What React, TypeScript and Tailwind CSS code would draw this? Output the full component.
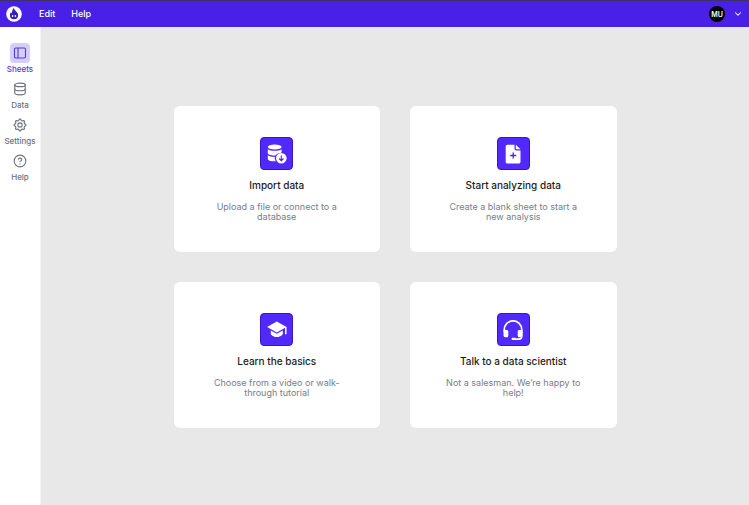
import type { ReactNode } from "react";
import { ChevronDown, CircleHelp, Database } from "lucide-react";

function Logo() {
  return (
    <svg viewBox="0 0 16 16" className="size-4" aria-hidden="true">
      <circle cx="8" cy="8" r="7.8" fill="#fff" />
      <path
        d="M7.8 2c.4 1.500 1.500 2.600 2.600 3.700 1 1 1.700 2.100 1.700 3.500a4.100 4.100 0 0 1-8.200 0c0-1.200.4-2.100 1-2.900.2.500.6.800 1 .9C6 5.300 6.500 3.300 7.800 2Z"
        fill="#3a1fc0"
      />
      <ellipse cx="6.600" cy="10" rx=".8" ry="1.100" fill="#fff" />
      <ellipse cx="9.400" cy="10" rx=".8" ry="1.100" fill="#fff" />
    </svg>
  );
}

function SheetsIcon() {
  return (
    <svg
      viewBox="0 0 14 14"
      className="size-3.5"
      fill="none"
      stroke="currentColor"
      strokeWidth="1.1"
      aria-hidden="true"
    >
      <rect x="1.500" y="2" width="11" height="10" rx="1.200" />
      <path d="M5 2v10" />
    </svg>
  );
}

function GearIcon() {
  return (
    <svg
      viewBox="0 0 24 24"
      className="size-3.5"
      fill="none"
      stroke="currentColor"
      strokeWidth="1.900"
      strokeLinejoin="round"
      aria-hidden="true"
    >
      <path d="M10 4.200 10.700 2h2.600l.7 2.200 2.100.9 2-.9 1.800 1.800-.9 2 .9 2.100 2.100.6v2.600l-2.100.7-.9 2.100.9 2-1.800 1.800-2-.9-2.100.9-.7 2.100h-2.600l-.7-2.100-2.100-.9-2 .9-1.800-1.800.9-2-.9-2.100-2.100-.7v-2.600l2.100-.6.9-2.100-.9-2 1.800-1.800 2 .9Z" />
      <circle cx="12" cy="12" r="3.700" />
    </svg>
  );
}

function ImportIcon() {
  return (
    <svg viewBox="0 0 20 20" className="size-5" fill="#fff" aria-hidden="true">
      <ellipse cx="7.700" cy="3" rx="6.900" ry="2.600" />
      <path d="M.8 5.200c1.300 1.100 4 1.600 6.900 1.600s5.600-.5 6.900-1.600v2.600c0 .5-.4.900-1.100 1.200-2.200.2-4 1.100-5 2.500C3.900 11.700.8 10.600.8 9.300Z" />
      <path d="M.8 11.200c1.400 1 3.900 1.500 7 1.500a6.700 6.700 0 0 0 .9 4.600C4.300 17.600.8 16.500.8 15Z" />
      <circle cx="14.300" cy="14.200" r="5.300" />
      <path
        d="M14.300 11.500v5m-2.200-2 2.200 2.200 2.200-2.200"
        fill="none"
        stroke="#4b22ee"
        strokeWidth="1.100"
      />
    </svg>
  );
}

function NewSheetIcon() {
  return (
    <svg viewBox="0 0 20 20" className="size-5" aria-hidden="true">
      <path
        d="M4.500.7h7v3.800c0 1.200.8 2 2 2h4v11.200c0 1-.8 1.800-1.800 1.800H4.500c-1 0-1.800-.8-1.800-1.800V2.500c0-1 .8-1.800 1.800-1.800Z"
        fill="#fff"
      />
      <path d="M12.800.7 17.500 5.200h-3.900c-.5 0-.8-.3-.8-.8Z" fill="#fff" />
      <path d="M10.200 8.500v6M7.200 11.500h6" stroke="#4b22ee" strokeWidth="1.300" />
    </svg>
  );
}

function GraduationIcon() {
  return (
    <svg viewBox="0 0 20 20" className="size-5" fill="#fff" aria-hidden="true">
      <path d="M9.800 1.500 19.500 7l-9.700 5.500L.1 7Z" />
      <path d="M3.800 10.400v3.800c1.500 1.800 3.600 2.900 6 2.900s4.500-1.100 6-2.900v-3.800l-6 3.400Z" />
      <path d="M18.800 7v7.300" fill="none" stroke="#fff" strokeWidth="1.500" />
    </svg>
  );
}

function HeadsetIcon() {
  return (
    <svg viewBox="0 0 20 20" className="size-5" aria-hidden="true">
      <path
        d="M1.300 12V9.500a8.700 8.700 0 0 1 17.400 0v6.700c0 1.700-1.200 2.900-2.900 2.900H9.500"
        fill="none"
        stroke="#fff"
        strokeWidth="1.700"
      />
      <path
        d="M.5 10h3.300c.9 0 1.500.6 1.500 1.500v4.300c0 .9-.6 1.500-1.500 1.500H2.500c-1.200 0-2-.8-2-2Zm19 0h-3.300c-.9 0-1.500.6-1.500 1.500v4.300c0 .9.600 1.500 1.500 1.500h1.300c1.200 0 2-.8 2-2Z"
        fill="#fff"
      />
      <rect x="8.500" y="17.700" width="4.500" height="2.200" rx="1.100" fill="#fff" />
    </svg>
  );
}

const navItems = [
  { label: "Sheets", icon: <SheetsIcon />, active: true },
  { label: "Data", icon: <Database className="size-3.5" strokeWidth={1.9} /> },
  { label: "Settings", icon: <GearIcon /> },
  { label: "Help", icon: <CircleHelp className="size-3.5" strokeWidth={1.9} /> },
];

const cards = [
  {
    title: "Import data",
    text: "Upload a file or connect to a database",
    icon: <ImportIcon />,
  },
  {
    title: "Start analyzing data",
    text: "Create a blank sheet to start a new analysis",
    icon: <NewSheetIcon />,
  },
  {
    title: "Learn the basics",
    text: "Choose from a video or walk-through tutorial",
    icon: <GraduationIcon />,
  },
  {
    title: "Talk to a data scientist",
    text: "Not a salesman. We’re happy to help!",
    icon: <HeadsetIcon />,
  },
];

function NavLink({
  label,
  icon,
  active,
}: {
  label: string;
  icon: ReactNode;
  active?: boolean;
}) {
  return (
    <a
      href="#"
      aria-current={active ? "page" : undefined}
      className={
        active
          ? "flex flex-col items-center text-[#5638dc]"
          : "flex flex-col items-center text-[#6b7280]"
      }
    >
      <span
        className={
          active
            ? "flex size-5 items-center justify-center rounded bg-[#d5cdfb]"
            : "flex size-5 items-center justify-center"
        }
      >
        {icon}
      </span>
      <span className="text-[8px] leading-3 font-medium">{label}</span>
    </a>
  );
}

function StartCard({
  title,
  text,
  icon,
}: {
  title: string;
  text: string;
  icon: ReactNode;
}) {
  return (
    <button
      type="button"
      className="flex flex-col items-center rounded-md bg-white px-9 pt-[31px] pb-[30px] text-center"
    >
      <span className="flex size-[33px] items-center justify-center rounded border border-[#3a16c8] bg-[#5229fb]">
        {icon}
      </span>
      <span className="mt-2 text-[10px] leading-[14px] font-medium whitespace-nowrap text-[#1c1c22]">
        {title}
      </span>
      <span className="mt-2.5 text-[9px] leading-[10px] text-[#75808a]">{text}</span>
    </button>
  );
}

export default function App() {
  return (
    <div className="flex min-h-screen flex-col bg-[#e8e8e8] font-['Inter',sans-serif]">
      <header className="flex h-[27px] items-center border-t border-[#3a3268] bg-[#4820e8] pr-1.5 pl-1.5 text-white">
        <Logo />
        <nav className="ml-[17px] flex gap-4 text-[9px] leading-3 font-medium">
          <button type="button">Edit</button>
          <button type="button">Help</button>
        </nav>
        <button type="button" aria-label="Account" className="ml-auto flex items-center gap-2">
          <span className="flex size-4 items-center justify-center rounded-full bg-black text-[7px] leading-none font-semibold">
            MU
          </span>
          <ChevronDown className="size-2.5" strokeWidth={2.5} />
        </button>
      </header>

      <div className="flex flex-1">
        <aside className="w-[41px] shrink-0 border-r border-[#f4f4f4] bg-white pt-4">
          <nav className="flex flex-col gap-1">
            {navItems.map((item) => (
              <NavLink key={item.label} {...item} />
            ))}
          </nav>
        </aside>

        <main className="flex flex-1 items-center justify-center px-6 pt-[26px] pb-6">
          <div className="grid w-full max-w-[443px] grid-cols-2 gap-[30px]">
            {cards.map((card) => (
              <StartCard key={card.title} {...card} />
            ))}
          </div>
        </main>
      </div>
    </div>
  );
}
